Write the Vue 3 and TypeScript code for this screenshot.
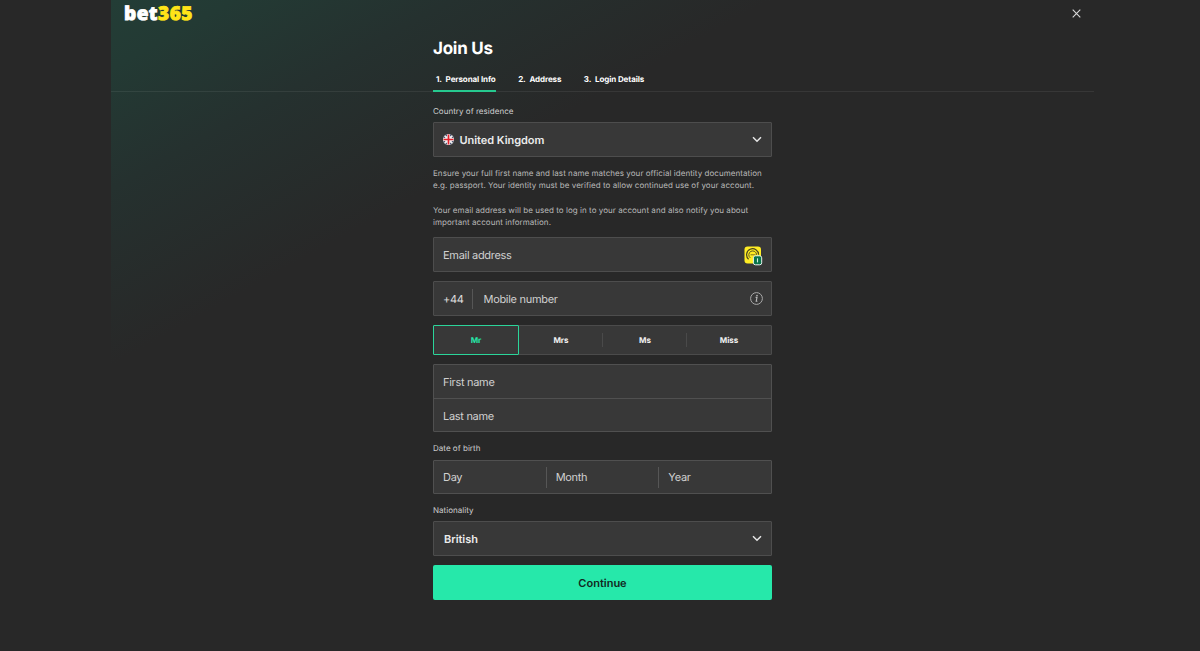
<script setup lang="ts">
import { ref } from 'vue'

const steps = ['Personal Info', 'Address', 'Login Details']
const titles = ['Mr', 'Mrs', 'Ms', 'Miss']
const dateParts = ['Day', 'Month', 'Year']
const selectedTitle = ref('Mr')
const activeStep = ref(0)
</script>

<template>
  <div class="page">
    <main class="panel">
      <header class="top">
        <div class="logo"><span class="logo-bet">bet</span><span class="logo-num">365</span></div>
        <button class="close" aria-label="Close">
          <svg width="9" height="9" viewBox="0 0 9 9"><path d="M.7 .7L8.3 8.3M8.3 .7L.7 8.3" fill="none" stroke="#d8d8d8" stroke-width="1.1" /></svg>
        </button>
      </header>

      <div class="heading">
        <h1>Join Us</h1>
        <nav class="steps">
          <a v-for="(step, i) in steps" :key="step" class="step" :class="{ active: i === activeStep }" @click="activeStep = i">
            <span class="num">{{ i + 1 }}.</span><span>{{ step }}</span>
          </a>
        </nav>
      </div>

      <form class="form" @submit.prevent>
        <div class="label first-label">Country of residence</div>
        <div class="field select">
          <svg class="flag" width="11" height="11" viewBox="0 0 22 22">
            <circle cx="11" cy="11" r="11" fill="#f2f2f2" />
            <path d="M8 .6V5L4.300 2.300A11 11 0 0 1 8 .6ZM14 .6V5L17.700 2.300A11 11 0 0 0 14 .6ZM8 21.400V17L4.300 19.700A11 11 0 0 0 8 21.400ZM14 21.400V17L17.700 19.700A11 11 0 0 1 14 21.400ZM.6 8H5L2.300 4.600A11 11 0 0 0 .6 8ZM21.400 8H17L19.700 4.600A11 11 0 0 1 21.400 8ZM.6 14H5L2.300 17.400A11 11 0 0 1 .6 14ZM21.400 14H17L19.700 17.400A11 11 0 0 0 21.400 14Z" fill="#4a5370" />
            <path d="M9.300 1H12.700V9.300H21V12.700H12.700V21H9.300V12.700H1V9.300H9.300Z" fill="#e3202b" />
          </svg>
          <span class="value">United Kingdom</span>
          <svg class="chevron" width="10" height="7" viewBox="0 0 10 7"><path d="M1 1.200L5 5.200L9 1.200" fill="none" stroke="#e6e6e6" stroke-width="1.5" /></svg>
        </div>

        <div class="notes">
          <p>Ensure your full first name and last name matches your official identity documentation<br>e.g. passport. Your identity must be verified to allow continued use of your account.</p>
          <p>Your email address will be used to log in to your account and also notify you about<br>important account information.</p>
        </div>

        <div class="field email">
          <span class="hint">Email address</span>
          <svg class="manager" width="19" height="20" viewBox="0 0 19 20">
            <rect x=".5" y=".5" width="16.500" height="17" rx="3" fill="#ffed24" />
            <path d="M4.600 13.200A6 6 0 1 1 14.600 8.800" fill="none" stroke="#4a4520" stroke-width="1.200" />
            <path d="M6.300 11.900A3.900 3.900 0 1 1 12.600 8.800" fill="none" stroke="#5a531e" stroke-width="1" />
            <path d="M6.500 8.800H11.500" stroke="#5a531e" stroke-width=".8" />
            <rect x="9.400" y="9.800" width="8.300" height="9" rx="2" fill="#08744b" stroke="#e9f2ed" stroke-width="1" />
            <path d="M13.500 12.300V16.400" stroke="#d7eee3" stroke-width="1.100" />
          </svg>
        </div>

        <div class="field mobile">
          <span class="code">+44</span>
          <span class="hint mobile-hint">Mobile number</span>
          <svg class="info" width="13" height="13" viewBox="0 0 13 13">
            <circle cx="6.500" cy="6.500" r="5.900" fill="none" stroke="#a9a9a9" stroke-width="1" />
            <path d="M5.600 5.400H7L6.200 9.300H7.400" fill="none" stroke="#bcbcbc" stroke-width="1.100" />
            <circle cx="7" cy="3.600" r=".8" fill="#bcbcbc" />
          </svg>
        </div>

        <div class="titles">
          <button v-for="title in titles" :key="title" type="button" :class="{ selected: title === selectedTitle }" @click="selectedTitle = title">{{ title }}</button>
        </div>

        <div class="names">
          <div class="name hint">First name</div>
          <div class="name hint">Last name</div>
        </div>

        <div class="label dob-label">Date of birth</div>
        <div class="dates">
          <div v-for="part in dateParts" :key="part" class="date hint">{{ part }}</div>
        </div>

        <div class="label nat-label">Nationality</div>
        <div class="field select">
          <span class="value british">British</span>
          <svg class="chevron" width="10" height="7" viewBox="0 0 10 7"><path d="M1 1.200L5 5.200L9 1.200" fill="none" stroke="#e6e6e6" stroke-width="1.5" /></svg>
        </div>
        <button class="continue" type="submit">Continue</button>
      </form>
    </main>
  </div>
</template>

<style>
body { margin: 0; background: #282828; }
</style>

<style scoped>
.page {
  height: 651px;
  overflow: hidden;
  background: #282828;
  font-family: Inter, "Liberation Sans", sans-serif;
  text-rendering: geometricPrecision;
  color: #fff;
}
.page * { box-sizing: border-box; }
button { font-family: inherit; margin: 0; padding: 0; border: 0; background: none; color: inherit; text-rendering: inherit; }
.panel {
  width: 983px;
  height: 651px;
  margin-left: 111px;
  background: linear-gradient(151deg, #233d36 0, #233a34 60px, #25312f 165px, #282828 320px);
}
.top {
  height: 27px;
  display: flex;
  justify-content: space-between;
  align-items: center;
  padding: 0 13px 0 13px;
}
.logo {
  font: 800 19px/27px "Open Sans", sans-serif;
  letter-spacing: 0.45px;
  -webkit-text-stroke: 0.8px currentColor;
}
.logo-num { color: #ffe418; }
.close { width: 9px; height: 9px; display: flex; }
.heading {
  height: 65px;
  padding: 11px 0 0 322px;
  border-bottom: 1px solid rgba(255, 255, 255, 0.07);
}
h1 { margin: 0; font-size: 17px; line-height: 22px; font-weight: 700; letter-spacing: -0.25px; }
.steps { display: flex; gap: 19.5px; padding-top: 11px; }
.step {
  height: 21px;
  padding-left: 3px;
  font-size: 8px;
  line-height: 17px;
  font-weight: 700;
  letter-spacing: -0.1px;
  display: flex;
  gap: 3.700px;
}
.step.active { border-bottom: 2px solid #26c98f; }
.form { width: 339px; margin-left: 322px; }
.label { font-size: 8px; line-height: 10px; letter-spacing: 0.03px; color: #cfcfcf; }
.first-label { padding-top: 14px; height: 30px; }
.field {
  height: 35px;
  border: 1px solid #4d4d4d;
  border-radius: 1px;
  background: #383838;
  display: flex;
  align-items: center;
  padding: 0 9px;
}
.value { font-size: 11px; font-weight: 600; color: #ececec; margin-left: 5.500px; letter-spacing: -0.04px; }
.british { margin-left: 1px; }
.chevron { margin-left: auto; }
.notes { height: 80px; padding-top: 10px; }
p { margin: 0 0 12px; font-size: 8px; line-height: 12.3px; letter-spacing: 0.05px; color: #b9b9b9; white-space: nowrap; }
.hint { font-size: 11px; letter-spacing: -0.3px; color: #d0d0d0; }
.manager { margin-left: auto; margin-top: 2px; margin-right: -1px; }
.mobile { margin-top: 9px; padding-right: 8px; }
.code { font-size: 11px; line-height: 20px; letter-spacing: -0.3px; color: #dedede; width: 30px; border-right: 1px solid #565656; }
.mobile-hint { margin-left: 10.500px; }
.info { margin-left: auto; }
.titles {
  display: flex;
  height: 30px;
  margin-top: 9px;
  border: 1px solid #4b4b4b;
  border-radius: 1px;
  background: #383838;
}
.titles button { flex: 1; font-size: 8px; font-weight: 700; color: #f0f0f0; position: relative; }
.titles button:nth-child(n + 2):not(:last-child)::after {
  content: "";
  position: absolute;
  right: 0;
  top: 7px;
  height: 14px;
  width: 1px;
  background: #4a4a4a;
}
.titles button.selected { margin: -1px 0 -1px -1px; border: 1px solid #2bd59a; color: #26e6a8; border-radius: 1px; }
.names { margin-top: 9px; height: 68px; border: 1px solid #505050; border-radius: 1px; background: #383838; }
.name { height: 33px; line-height: 34px; padding-left: 9px; }
.name + .name { border-top: 1px solid #505050; }
.dob-label { padding-top: 11px; height: 28px; }
.dates { height: 34px; display: flex; align-items: center; border: 1px solid #505050; border-radius: 1px; background: #383838; }
.date { flex: 1; line-height: 21px; padding-left: 9px; }
.date + .date { border-left: 1px solid #565656; }
.nat-label { padding-top: 11px; height: 27px; }
.continue {
  display: block;
  width: 339px;
  height: 35px;
  margin-top: 9px;
  border-radius: 2px;
  background: #26e8aa;
  color: #12291f;
  font-size: 11px;
  font-weight: 600;
}
</style>
